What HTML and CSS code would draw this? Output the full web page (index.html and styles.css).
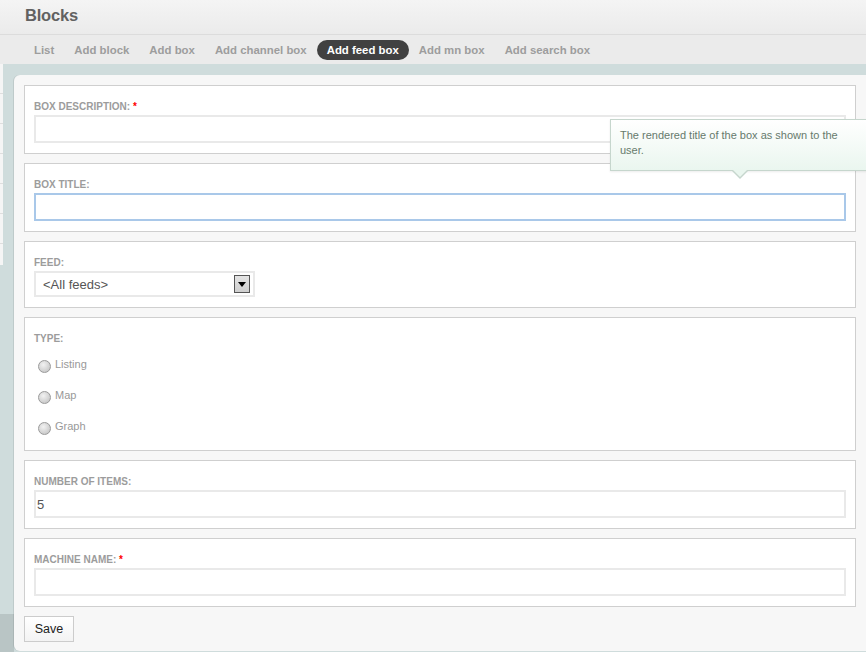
FILE: index.html
```html
<!DOCTYPE html>
<html>
<head>
<meta charset="utf-8">
<title>Blocks</title>
<link rel="stylesheet" href="styles.css">
</head>
<body>
<header class="page-head">
  <h1 class="page-title">Blocks</h1>
</header>
<nav class="tabs">
  <a class="tab">List</a>
  <a class="tab">Add block</a>
  <a class="tab">Add box</a>
  <a class="tab">Add channel box</a>
  <a class="tab active">Add feed box</a>
  <a class="tab">Add mn box</a>
  <a class="tab">Add search box</a>
</nav>
<div class="stage">
  <div class="modal">
    <div class="field">
      <label class="field-label">Box description: <span class="req">*</span></label>
      <div class="input"></div>
    </div>
    <div class="field">
      <label class="field-label">Box title:</label>
      <div class="input focus"></div>
      <div class="tooltip">The rendered title of the box as shown to the user.</div>
    </div>
    <div class="field">
      <label class="field-label">Feed:</label>
      <div class="select">
        <span class="select-value">&lt;All feeds&gt;</span>
        <span class="select-btn"><svg width="8" height="5" viewBox="0 0 8 5"><path d="M0 0h8L4 5z" fill="#000"/></svg></span>
      </div>
    </div>
    <div class="field field-radios">
      <label class="field-label">Type:</label>
      <div class="radio-row"><span class="radio"></span><span class="radio-label">Listing</span></div>
      <div class="radio-row"><span class="radio"></span><span class="radio-label">Map</span></div>
      <div class="radio-row"><span class="radio"></span><span class="radio-label">Graph</span></div>
    </div>
    <div class="field">
      <label class="field-label">Number of items:</label>
      <div class="input">5</div>
    </div>
    <div class="field">
      <label class="field-label">Machine name: <span class="req">*</span></label>
      <div class="input"></div>
    </div>
    <button class="save">Save</button>
  </div>
</div>
</body>
</html>
```
FILE: styles.css
```css
html, body {
  margin: 0;
  padding: 0;
}
body {
  width: 866px;
  height: 652px;
  overflow: hidden;
  font-family: "Liberation Sans", Arial, sans-serif;
  background: #cfdcdc;
}
.page-head {
  height: 34px;
  border-bottom: 1px solid #dcdcdc;
  background: linear-gradient(to bottom, #f4f4f4, #ebebeb);
  padding-left: 25px;
  box-sizing: content-box;
}
.page-title {
  margin: 0;
  font-size: 16.5px;
  line-height: 31px;
  font-weight: bold;
  color: #616161;
  letter-spacing: -0.2px;
}
.tabs {
  height: 29px;
  background: #ebebeb;
  display: flex;
  align-items: flex-start;
  padding: 5px 0 0 24px;
  box-sizing: border-box;
}
.tab {
  display: block;
  padding: 0 10px;
  height: 20px;
  line-height: 20px;
  font-size: 11.4px;
  font-weight: bold;
  color: #9d9d9d;
  border-radius: 10px;
  white-space: nowrap;
}
.tab.active {
  background: #414141;
  color: #fff;
}
.stage {
  height: 588px;
  padding: 11px 0 0 14px;
  box-sizing: border-box;
  background:
    repeating-linear-gradient(to bottom, #f5f5f5 0 29px, #dedede 29px 30px) 0 0 / 3px 201px no-repeat,
    linear-gradient(#b9c5c5, #b9c5c5) 0 100% / 14px 38px no-repeat,
    #cfdcdc;
}
.modal {
  background: #f7f7f7;
  border-radius: 6px 0 0 6px;
  padding: 10px 10px 9px 10px;
  box-shadow: -1px 0 0 rgba(0, 0, 0, 0.08);
  position: relative;
}
.field {
  position: relative;
  background: #fff;
  border: 1px solid #cfcfcf;
  padding: 15px 9px 10px;
  margin-bottom: 9px;
}
.field-label {
  display: block;
  font-size: 10px;
  line-height: 12px;
  font-weight: bold;
  color: #9c9c9c;
  text-transform: uppercase;
  margin-bottom: 2px;
}
.req {
  color: #f00;
}
.input {
  height: 28px;
  box-sizing: border-box;
  border: 2px solid #e9e9e9;
  padding: 0 1px;
  font-size: 13px;
  line-height: 25px;
  color: #555;
  background: #fff;
}
.input.focus {
  border-color: #a9c8e9;
}
.select {
  width: 221px;
  height: 26px;
  box-sizing: border-box;
  border: 2px solid #e9e9e9;
  display: flex;
  align-items: center;
  justify-content: space-between;
  padding: 0 3px 0 7px;
}
.select-value {
  font-size: 13px;
  color: #555;
}
.select-btn {
  width: 16px;
  height: 18px;
  box-sizing: border-box;
  border: 1px solid #555;
  background: linear-gradient(to bottom, #e4e4e4, #cfcfcf);
  display: flex;
  align-items: center;
  justify-content: center;
  padding-top: 1px;
}
.select-btn svg {
  display: block;
}
.field-radios {
  padding-bottom: 7px;
}
.field-radios .field-label {
  margin-bottom: 5px;
}
.radio-row {
  height: 31px;
  display: flex;
  align-items: center;
  padding-left: 4px;
}
.radio {
  width: 13px;
  height: 13px;
  box-sizing: border-box;
  border-radius: 50%;
  border: 1px solid #9a9a9a;
  background: radial-gradient(circle at 40% 35%, #f2f2f2, #cdcdcd 70%, #bdbdbd);
  margin-right: 4px;
  margin-top: 2px;
}
.radio-label {
  font-size: 11px;
  color: #999;
  margin-top: -3px;
}
.save {
  display: block;
  width: 50px;
  height: 26px;
  border: 1px solid #cccccc;
  background: linear-gradient(to bottom, #ffffff, #f3f3f3);
  font-family: "Liberation Sans", Arial, sans-serif;
  font-size: 12.5px;
  color: #222;
  padding: 0;
  margin: 0;
}
.tooltip {
  position: absolute;
  left: 585px;
  top: -45px;
  width: 240px;
  padding: 8px 9px 12px;
  font-size: 11px;
  line-height: 15px;
  color: #667a6c;
  background: linear-gradient(to bottom, #ffffff, #eaf6ef);
  border: 1px solid #c6d6cd;
  box-shadow: 0 1px 2px rgba(0, 0, 0, 0.08);
  z-index: 2;
}
.tooltip::before,
.tooltip::after {
  content: "";
  position: absolute;
  left: 121px;
  width: 0;
  height: 0;
  border-left: 8px solid transparent;
  border-right: 8px solid transparent;
}
.tooltip::before {
  bottom: -9px;
  border-top: 8px solid #c6d6cd;
}
.tooltip::after {
  bottom: -7px;
  border-top: 7px solid #eaf6ef;
  left: 122px;
  border-left-width: 7px;
  border-right-width: 7px;
}
```
